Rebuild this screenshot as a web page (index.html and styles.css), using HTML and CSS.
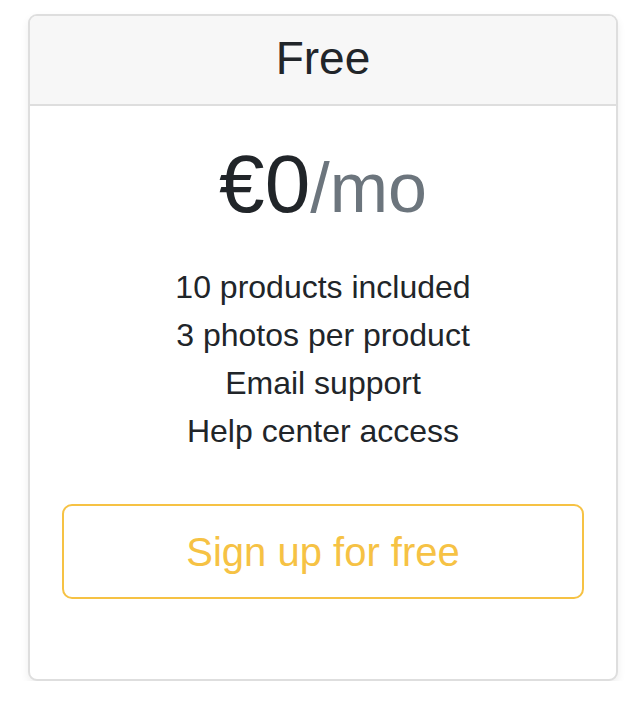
FILE: index.html
```html
<!DOCTYPE html>
<html lang="en">
<head>
<meta charset="utf-8">
<title>Pricing</title>
<link rel="stylesheet" href="styles.css">
</head>
<body>
<div class="card">
  <div class="card-header">
    <h4 class="plan-name">Free</h4>
  </div>
  <div class="card-body">
    <h1 class="price">€0<small class="per">/mo</small></h1>
    <ul class="features">
      <li>10 products included</li>
      <li>3 photos per product</li>
      <li>Email support</li>
      <li>Help center access</li>
    </ul>
    <button type="button" class="btn-signup">Sign up for free</button>
  </div>
</div>
</body>
</html>
```
FILE: styles.css
```css
html, body {
  margin: 0;
  padding: 0;
  background: #ffffff;
}

body {
  font-family: "Liberation Sans", Arial, Helvetica, sans-serif;
  color: #212529;
  padding: 14px 0 0 28px;
}

.card {
  width: 590px;
  height: 667px;
  box-sizing: border-box;
  border: 2px solid #dedede;
  border-radius: 9px;
  box-shadow: 0 4px 8px rgba(0, 0, 0, 0.07);
  background: #ffffff;
  display: flex;
  flex-direction: column;
  overflow: hidden;
}

.card-header {
  height: 88px;
  background: #f7f7f7;
  border-bottom: 2px solid #dedede;
  display: flex;
  align-items: center;
  justify-content: center;
}

.plan-name {
  margin: 0;
  font-size: 46px;
  font-weight: 400;
  line-height: 1.2;
  padding-bottom: 2px;
}

.card-body {
  padding: 0 32px;
  display: flex;
  flex-direction: column;
  align-items: stretch;
  text-align: center;
}

.price {
  margin: 30px 0 0;
  font-size: 82px;
  font-weight: 400;
  line-height: 96px;
  height: 96px;
}

.per {
  font-size: 70px;
  color: #6c757d;
  font-weight: 400;
}

.features {
  list-style: none;
  margin: 31px 0 0;
  padding: 0;
  font-size: 32px;
  line-height: 48px;
}

.btn-signup {
  margin-top: 49px;
  height: 95px;
  box-sizing: border-box;
  border: 2px solid #f6c244;
  border-radius: 10px;
  background: transparent;
  color: #f6c244;
  font-family: "Liberation Sans", Arial, Helvetica, sans-serif;
  font-size: 40px;
  line-height: 1.5;
  padding: 0;
  cursor: pointer;
}
```
